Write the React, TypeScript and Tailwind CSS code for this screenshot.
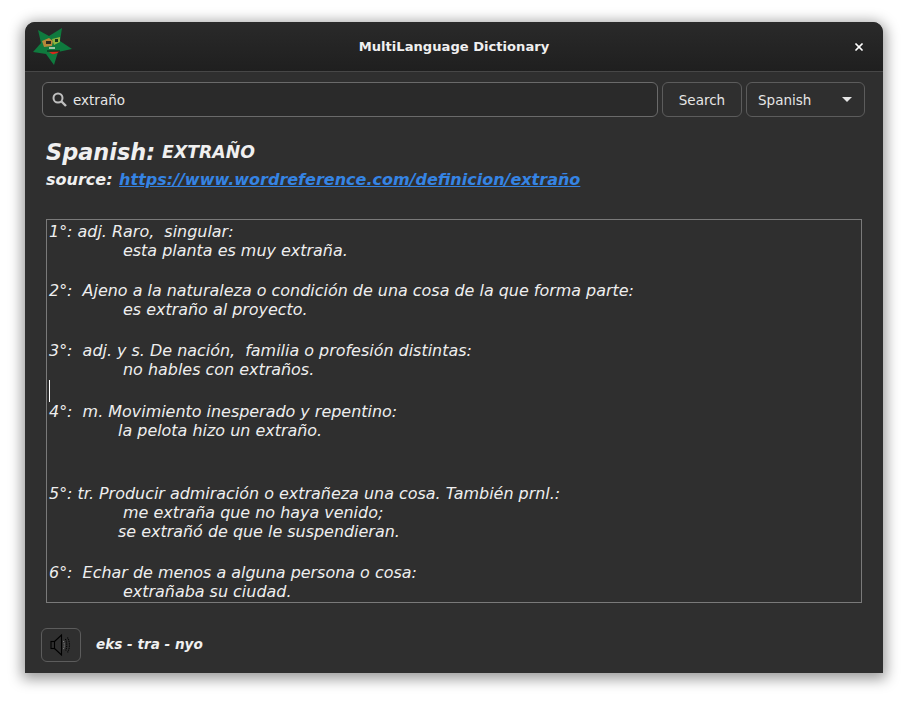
import { X } from 'lucide-react';

const blocks = [
  { mt: 'mt-0', lines: [['', '1°: adj. Raro,  singular:'], ['ml-[74px]', 'esta planta es muy extraña.']] },
  { mt: 'mt-[21px]', lines: [['', '2°:  Ajeno a la naturaleza o condición de una cosa de la que forma parte:'], ['ml-[74px]', 'es extraño al proyecto.']] },
  { mt: 'mt-[22px]', lines: [['', '3°:  adj. y s. De nación,  familia o profesión distintas:'], ['ml-[74px]', 'no hables con extraños.']] },
  { mt: 'mt-[23px]', lines: [['', '4°:  m. Movimiento inesperado y repentino:'], ['ml-[69px]', 'la pelota hizo un extraño.']] },
  { mt: 'mt-[44px]', lines: [['', '5°: tr. Producir admiración o extrañeza una cosa. También prnl.:'], ['ml-[74px]', 'me extraña que no haya venido;'], ['ml-[69px]', 'se extrañó de que le suspendieran.']] },
  { mt: 'mt-[22px]', lines: [['', '6°:  Echar de menos a alguna persona o cosa:'], ['ml-[74px]', 'extrañaba su ciudad.']] },
];

function AppLogo() {
  return (
    <svg width="42" height="40" viewBox="0 0 42 40" className="ml-[6px] mt-[4px]">
      <polygon points="7,4 18,10 31,2 29,15 41,23 27,26 23,39 15,28 2,26 10,17" fill="#0f7a3e" />
      <polygon points="11,15 18,12 22,15 21,20 13,21" fill="#b5873a" />
      <polygon points="21,13 29,11 29,16 23,19" fill="#8eb23e" />
      <rect x="15" y="15" width="5" height="3" fill="#2a2a20" />
      <rect x="24" y="13" width="3" height="3" fill="#12351f" />
      <rect x="18" y="21" width="6" height="2" fill="#9fc4a8" />
      <path d="M18 26 L29 25 Q25 29 21 28 Z" fill="#d8281c" />
      <path d="M16 25 L29 25" stroke="#111" strokeWidth="1" />
    </svg>
  );
}

function LensIcon() {
  return (
    <svg width="15" height="15" viewBox="0 0 15 15" fill="none" stroke="#bebebe" strokeWidth="2">
      <circle cx="6" cy="6" r="4.5" />
      <path d="M9.5 9.5 L14 14" strokeWidth="2.4" />
    </svg>
  );
}

function SpeakerIcon() {
  return (
    <svg width="22" height="24" viewBox="0 0 22 24" fill="none" stroke="#000" strokeWidth="1.1">
      <rect x="1" y="8.5" width="3.5" height="7" />
      <path d="M4.5 8.5 L11.5 2 V22 L4.5 15.5" />
      <path d="M13.5 8 Q15 12 13.5 16" strokeDasharray="1 0.8" stroke="#888" />
      <path d="M15.5 6 Q18 12 15.5 18" strokeDasharray="1 0.8" />
      <path d="M17.5 4.5 Q21.5 12 17.5 19.5" strokeDasharray="1 0.8" />
    </svg>
  );
}

export default function App() {
  return (
    <div className="min-h-screen bg-white pl-[25px] pt-[22px] font-['DejaVu_Sans',sans-serif]">
      <div className="flex h-[651px] w-[858px] flex-col overflow-hidden rounded-t-[10px] bg-[#2f2f2f] text-[#f0f0f0] shadow-[0_3px_14px_3px_rgba(0,0,0,0.4)]">
        {/* Header bar */}
        <div className="relative flex h-[50px] shrink-0 items-start border-b border-[#474747] bg-gradient-to-b from-[#2a2a2a] to-[#1f1f1f]">
          <AppLogo />
          <div className="absolute inset-x-0 top-[16px] text-center text-[13.1px] leading-[18px] font-bold">MultiLanguage Dictionary</div>
          <button className="absolute right-[18px] top-[19px] text-white">
            <X size={12} strokeWidth={3.5} />
          </button>
        </div>

        {/* Search row */}
        <div className="mt-[10px] flex h-[35px] gap-[4px] pl-[17px] pr-[18px] text-[13.5px]">
          <div className="flex w-[616px] items-center rounded-[6px] border border-[#6a6a6a] bg-[#2a2a2a] pl-[9px] text-[#e6e6e6]">
            <LensIcon />
            <span className="ml-[6px] pt-px">extraño</span>
          </div>
          <button className="w-[80px] rounded-[6px] border border-[#5c5c5c] pt-px text-[#e6e6e6]">Search</button>
          <div className="flex w-[119px] items-center justify-between rounded-[6px] border border-[#5c5c5c] pl-[11px] pr-[12px] text-[#e6e6e6]">
            <span className="pt-px">Spanish</span>
            <span className="h-0 w-0 border-x-[5px] border-t-[5px] border-x-transparent border-t-[#e6e6e6]" />
          </div>
        </div>

        {/* Title */}
        <div className="ml-[21px] mt-[19px] flex h-[32px] items-start font-bold italic">
          <span className="mt-px text-[22.4px] leading-[30px]">Spanish:</span>
          <span className="ml-[7px] mt-[2px] text-[17.3px] leading-[28px]">EXTRAÑO</span>
        </div>
        <div className="ml-[21px] text-[16px] leading-[24px] font-bold italic">
          source: <a className="ml-[1px] text-[#3584e4] underline">https://www.wordreference.com/definicion/extraño</a>
        </div>

        {/* Definition text */}
        <div className="relative ml-[21px] mt-[27px] h-[384px] w-[816px] overflow-hidden border border-[#7a7a7a] pl-[2px] pt-[2px] text-[15.95px] leading-[19px] whitespace-pre italic text-[#eeeeee]">
          {blocks.map((b, i) => (
            <div key={i} className={b.mt}>
              {b.lines.map(([cls, text], j) => (
                <div key={j} className={cls}>{text}</div>
              ))}
            </div>
          ))}
          <span className="absolute left-[2px] top-[160px] h-[22px] w-px bg-white" />
        </div>

        {/* Pronunciation */}
        <div className="ml-[16px] mt-[25px] flex items-center">
          <button className="flex h-[34px] w-[40px] items-center justify-center rounded-[6px] border border-[#5c5c5c]">
            <SpeakerIcon />
          </button>
          <span className="ml-[15px] pb-[2px] text-[13.6px] font-bold italic">eks - tra - nyo</span>
        </div>
      </div>
    </div>
  );
}
